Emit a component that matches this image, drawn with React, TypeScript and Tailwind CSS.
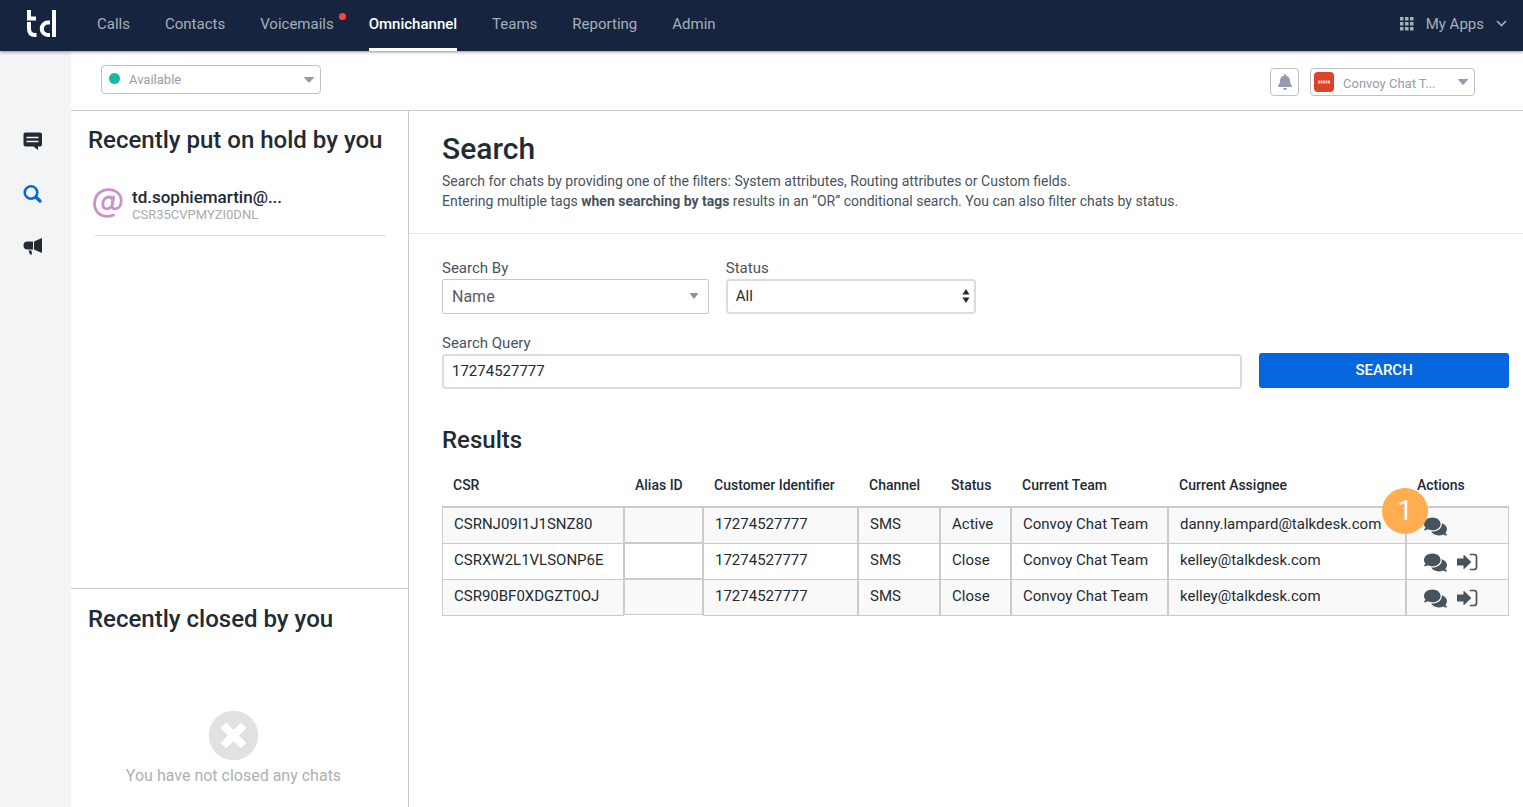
import { useState } from "react";
import type { ReactNode } from "react";
import { FaBell, FaComments, FaTimesCircle } from "react-icons/fa";

const navItems = [
  { label: "Calls" },
  { label: "Contacts" },
  { label: "Voicemails", alert: true },
  { label: "Omnichannel", active: true },
  { label: "Teams" },
  { label: "Reporting" },
  { label: "Admin" },
];

const columns = [
  { label: "CSR", width: "w-[182px]" },
  { label: "Alias ID", width: "w-[79px]" },
  { label: "Customer Identifier", width: "w-[155px]" },
  { label: "Channel", width: "w-[82px]" },
  { label: "Status", width: "w-[71px]" },
  { label: "Current Team", width: "w-[157px]" },
  { label: "Current Assignee", width: "w-[238px]" },
  { label: "Actions", width: "" },
];

const results = [
  { csr: "CSRNJ09I1J1SNZ80", status: "Active", assignee: "danny.lampard@talkdesk.com" },
  { csr: "CSRXW2L1VLSONP6E", status: "Close", assignee: "kelley@talkdesk.com" },
  { csr: "CSR90BF0XDGZT0OJ", status: "Close", assignee: "kelley@talkdesk.com" },
];

function Logo() {
  return (
    <svg width="30" height="28" viewBox="0 0 30 28" fill="none" stroke="#fff" strokeWidth="4" aria-hidden="true">
      <path d="M2 0V8.500H9" />
      <path d="M2 12V18.500Q2 25 8 25H9.500" />
      <path d="M23 12.500H21A6.200 6.200 0 0 0 21 25H23" />
      <path d="M27 0V27" />
    </svg>
  );
}

function Caret({ className }: { className: string }) {
  return (
    <svg
      viewBox="0 0 10 6"
      preserveAspectRatio="none"
      className={`pointer-events-none absolute ${className}`}
      fill="currentColor"
      aria-hidden="true"
    >
      <path d="M0.500 0H9.500Q10.300 0.400 9.700 1L5.500 5.600Q5 6 4.500 5.600L0.300 1Q-0.300 0.400 0.500 0Z" />
    </svg>
  );
}

function EmailIcon() {
  return (
    <svg
      width="30"
      height="30"
      viewBox="0 0 30 30"
      fill="none"
      stroke="currentColor"
      strokeWidth="2.800"
      strokeLinecap="round"
      className="-ml-0.5 mt-px text-[#cb92c9]"
      aria-hidden="true"
    >
      <path d="M20.500 27Q18 28.300 14.500 28.300C7 28.300 1.600 23.500 1.600 15.800C1.600 7.500 7.500 1.600 15.500 1.600C23 1.600 28.200 6.200 28.200 12.800C28.200 17.800 25.500 20.800 22 20.800C19.300 20.800 18.600 19 19.200 16.500L20.800 8.800" />
      <path d="M19.800 13C19.800 10.500 18.200 9 15.800 9C12.200 9 9.800 12.200 9.800 16C9.800 19 11.300 20.800 13.800 20.800C17.300 20.800 19.800 17.500 19.800 13Z" />
    </svg>
  );
}

function ReopenIcon() {
  return (
    <svg width="21" height="18" viewBox="0 0 21 18" aria-hidden="true">
      <path d="M0.500 5.500H6.500V2.500Q6.500 1.500 7.400 2.300L13.600 8.200Q14.400 9 13.600 9.800L7.400 15.700Q6.500 16.500 6.500 15.500V12.500H0.500Q0 12.500 0 12V6Q0 5.500 0.500 5.500Z" fill="currentColor" />
      <path d="M13.500 1.500H17A2.500 2.500 0 0 1 19.500 4V14A2.500 2.500 0 0 1 17 16.500H13.500" fill="none" stroke="currentColor" strokeWidth="1.700" strokeLinecap="round" />
    </svg>
  );
}

function Header() {
  return (
    <header className="relative z-10 flex h-[51px] items-stretch bg-[#162440] pl-[27px] pr-4 text-[15px] leading-5 text-[#a8afb6] shadow-[0_1px_3px_rgba(22,36,64,0.5)]">
      <a href="#home" aria-label="Home" className="mr-10 pt-2.5">
        <Logo />
      </a>
      <nav className="flex gap-[35px]">
        {navItems.map((item) => (
          <a
            key={item.label}
            href={`#${item.label.toLowerCase()}`}
            className={`relative pt-3.5 ${item.active ? "border-b-3 border-white font-medium text-white" : ""}`}
          >
            {item.label}
            {item.alert && <span className="absolute -right-3 top-[13px] size-[7px] rounded-full bg-[#ff4340]" />}
          </a>
        ))}
      </nav>
      <button className="ml-auto flex items-center gap-3 pb-1">
        <svg width="14" height="14" viewBox="0 0 14 14" fill="currentColor" aria-hidden="true">
          {[0, 5, 10].map((x) => [0, 5, 10].map((y) => <rect key={`${x}-${y}`} x={x} y={y} width="3.500" height="3.500" />))}
        </svg>
        My Apps
        <svg width="11" height="7" viewBox="0 0 11 7" fill="none" stroke="currentColor" strokeWidth="1.600" aria-hidden="true">
          <path d="M1 1L5.500 5.500L10 1" />
        </svg>
      </button>
    </header>
  );
}

function SideNav() {
  return (
    <nav className="flex w-[71px] shrink-0 flex-col items-center gap-[33px] bg-[#f2f4f6] pr-[5px] pt-[80px] text-[#222b33]">
      <a href="#conversations" aria-label="Conversations">
        <svg width="20" height="20" viewBox="0 0 20 20" aria-hidden="true">
          <path d="M2.500 1.500H17A2 2 0 0 1 19 3.500V13.500A2 2 0 0 1 17 15.500H15V19L10.500 15.500H2.500A2 2 0 0 1 0.500 13.500V3.500A2 2 0 0 1 2.500 1.500Z" fill="currentColor" />
          <path d="M3.500 6.500H15.500M3.500 10.500H15.500" stroke="#f2f4f6" strokeWidth="1.500" />
        </svg>
      </a>
      <a href="#search" aria-label="Search" className="text-[#0568e0]">
        <svg width="20" height="20" viewBox="0 0 20 20" fill="none" stroke="currentColor" aria-hidden="true">
          <circle cx="8" cy="8.500" r="6.300" strokeWidth="2.500" />
          <path d="M12.800 13L17 17" strokeWidth="3.400" strokeLinecap="round" />
        </svg>
      </a>
      <a href="#campaigns" aria-label="Campaigns">
        <svg width="20" height="20" viewBox="0 0 20 20" fill="currentColor" aria-hidden="true">
          <path d="M10 4.500H4.500Q0.500 4.500 0.500 8.500Q0.500 12.500 4.500 12.500H10Z" />
          <path d="M11 4.500L19 1V16L11 12.500Z" />
          <path d="M5.500 13.500H8.500L9 17.500H7Z" />
        </svg>
      </a>
    </nav>
  );
}

function Toolbar() {
  return (
    <div className="flex h-[60px] items-start border-b border-[#cacbcc] pl-[30px] pr-12 text-[13px] text-[#959cab]">
      <div className="relative mt-3.5 w-[220px]">
        <span className="pointer-events-none absolute left-2 top-2 size-[11px] rounded-full bg-[#14b8a6]" />
        <select aria-label="Agent status" className="h-[29px] w-full appearance-none rounded border border-[#bfc1c4] bg-transparent pl-[27px]">
          <option>Available</option>
        </select>
        <Caret className="right-[7px] top-3 h-1.5 w-[10px]" />
      </div>
      <button aria-label="Notifications" className="ml-auto mt-[17px] flex h-7 w-[29px] items-center justify-center rounded border border-[#bfc1c4]">
        <FaBell size={16} />
      </button>
      <div className="relative ml-[11px] mt-[17px] w-[165px]">
        <span className="pointer-events-none absolute left-1 top-1 flex size-5 items-center justify-center rounded bg-[#dc4427]">
          <svg width="12" height="4" viewBox="0 0 12 4" aria-hidden="true">
            <path d="M0 2H12" stroke="#f6c9bf" strokeWidth="3" strokeDasharray="2 0.500" />
          </svg>
        </span>
        <select aria-label="Team" className="h-7 w-full appearance-none rounded border border-[#bfc1c4] bg-transparent pl-8 pt-[3px]">
          <option>Convoy Chat T...</option>
        </select>
        <Caret className="right-[7px] top-[11px] h-1.5 w-[10px]" />
      </div>
    </div>
  );
}

function HistoryPanel() {
  return (
    <aside className="flex w-[338px] shrink-0 flex-col border-r border-[#cacbcc]">
      <section className="flex-1 px-[17px] pt-3.5">
        <h2 className="text-2xl leading-[30px] font-medium">Recently put on hold by you</h2>
        <a href="#td.sophiemartin" className="ml-[7px] mr-[5px] mt-8 flex border-b border-[#dcdcdc] pb-3">
          <EmailIcon />
          <span className="ml-[9px]">
            <span className="block text-[17px] leading-5 font-medium">td.sophiemartin@...</span>
            <span className="block text-[13px] leading-4 text-[#a9abad]">CSR35CVPMYZI0DNL</span>
          </span>
        </a>
      </section>
      <section className="border-t border-[#cacbcc] px-[17px] pt-[15px] pb-[19px]">
        <h2 className="text-2xl leading-[30px] font-medium">Recently closed by you</h2>
        <div className="flex flex-col items-center pr-3 pt-[76px] text-base text-[#aeb0b1]">
          <FaTimesCircle size={51} className="text-[#e1e1e1]" />
          <p className="mt-[3px]">You have not closed any chats</p>
        </div>
      </section>
    </aside>
  );
}

function Field({ id, label, className, children }: { id: string; label: string; className?: string; children: ReactNode }) {
  return (
    <div className={className}>
      <label htmlFor={id} className="block text-[15px] leading-[22px] text-[#47535d]">
        {label}
      </label>
      {children}
    </div>
  );
}

const cell = "h-9 whitespace-nowrap border-x border-t border-[#cacbcc] pb-[3px] pl-[11px] group-last:h-[37px] group-last:border-b group-odd:bg-[#f9f9f9]";

function ResultsTable() {
  return (
    <table className="w-full table-fixed border-separate border-spacing-0 text-left">
      <thead>
        <tr>
          {columns.map((col) => (
            <th key={col.label} className={`${col.width} h-[44px] whitespace-nowrap border-b border-[#cacbcc] pl-[11px] text-sm font-medium`}>
              {col.label}
            </th>
          ))}
        </tr>
      </thead>
      <tbody className="text-[15px] leading-5">
        {results.map((row, i) => (
          <tr key={row.csr} className="group">
            <td className={cell}>{row.csr}</td>
            <td className="p-0 align-top">
              <div className="h-9 border border-[#cacbcc] group-odd:bg-[#f9f9f9]" />
            </td>
            <td className={cell}>17274527777</td>
            <td className={cell}>SMS</td>
            <td className={cell}>{row.status}</td>
            <td className={cell}>Convoy Chat Team</td>
            <td className={cell}>{row.assignee}</td>
            <td className={`${cell} relative`}>
              <div className="flex items-center gap-2.5 pl-1.5 pt-1 text-[#47535d]">
                <button aria-label="View conversation">
                  <FaComments size={23} />
                </button>
                {i > 0 && (
                  <button aria-label="Reopen conversation">
                    <ReopenIcon />
                  </button>
                )}
              </div>
              {i === 0 && (
                <span className="absolute -left-[25px] -top-[20px] flex size-[46px] items-center justify-center rounded-full bg-[#ffad4f] text-[27px] text-white">
                  1
                </span>
              )}
            </td>
          </tr>
        ))}
      </tbody>
    </table>
  );
}

function SearchPage() {
  const [query, setQuery] = useState("17274527777");

  return (
    <main className="min-w-0 flex-1">
      <div className="border-b border-[#e6e7e8] px-[33px] pb-[22px] pt-[18px]">
        <h1 className="text-[30px] leading-10 font-medium">Search</h1>
        <p className="mt-0.5 text-sm text-[#47535d]">
          Search for chats by providing one of the filters: System attributes, Routing attributes or Custom fields.
          <br />
          Entering multiple tags <strong>when searching by tags</strong> results in an “OR” conditional search. You can also
          filter chats by status.
        </p>
      </div>
      <div className="pl-[33px] pr-3.5 pt-[23px]">
        <form onSubmit={(e) => e.preventDefault()} className="grid grid-cols-4 gap-y-[18px]">
          <Field id="search-by" label="Search By">
            <div className="relative">
              <select id="search-by" className="h-[35px] w-full appearance-none rounded-xs border border-[#c6c8c9] pl-[9px] text-base text-[#5c5c5c]">
                <option>Name</option>
                <option>Phone</option>
              </select>
              <Caret className="right-[11px] top-[14px] h-[6px] w-2 text-[#909090]" />
            </div>
          </Field>
          <Field id="status" label="Status" className="pl-[17px]">
            <div className="relative">
              <select id="status" className="h-[35px] w-full appearance-none rounded border-2 border-[#dcdcdc] pl-2 text-[15px]">
                <option>All</option>
                <option>Active</option>
                <option>Close</option>
              </select>
              <svg width="8" height="14" viewBox="0 0 8 14" className="pointer-events-none absolute right-1.5 top-2.5" fill="currentColor" aria-hidden="true">
                <path d="M4 0L7.500 5.500H0.500ZM4 14L0.500 8.500H7.500Z" />
              </svg>
            </div>
          </Field>
          <Field id="search-query" label="Search Query" className="col-span-3 col-start-1">
            <input
              id="search-query"
              value={query}
              onChange={(e) => setQuery(e.target.value)}
              className="block h-[35px] w-full rounded border-2 border-[#dcdcdc] pb-0.5 pl-2 text-[15px]"
            />
          </Field>
          <div className="self-end pl-[17px] pb-px">
            <button className="h-[35px] w-full rounded-[3px] bg-[#0566dd] text-[15px] font-medium text-white">SEARCH</button>
          </div>
        </form>
        <h2 className="mb-2 mt-9 text-2xl leading-[30px] font-medium">Results</h2>
        <ResultsTable />
      </div>
    </main>
  );
}

export default function App() {
  return (
    <div className="flex min-h-screen flex-col bg-white font-[Roboto,sans-serif] text-[#222b33]">
      <Header />
      <div className="flex flex-1">
        <SideNav />
        <div className="flex min-w-0 flex-1 flex-col">
          <Toolbar />
          <div className="flex flex-1">
            <HistoryPanel />
            <SearchPage />
          </div>
        </div>
      </div>
    </div>
  );
}
